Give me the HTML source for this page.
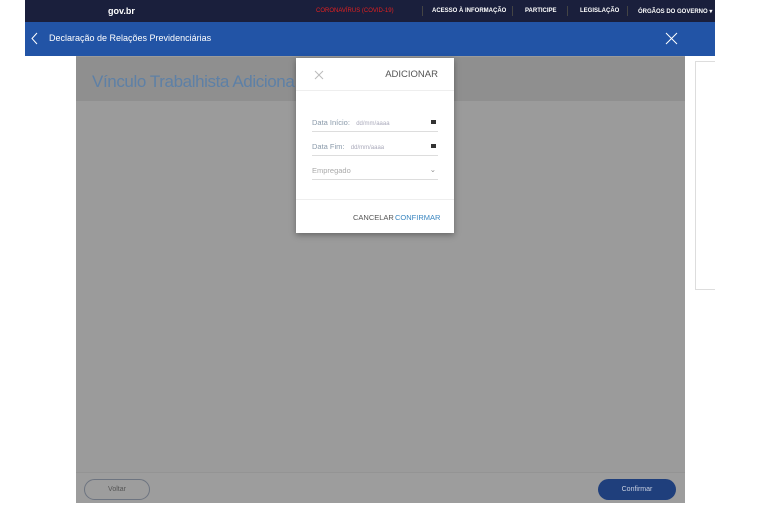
<!DOCTYPE html>
<html><head><meta charset="utf-8"><style>
*{margin:0;padding:0;box-sizing:border-box}
body{width:768px;height:512px;background:#fff;position:relative;overflow:hidden;font-family:"Liberation Sans",sans-serif}
.abs{position:absolute}
#top{left:25px;top:0;width:690px;height:22px;background:#1a1f3c;color:#fff;font-size:6px;font-weight:bold}
#top span{position:absolute;top:8px}
#blue{left:25px;top:22px;width:690px;height:34px;background:#2254a6;color:#fff;font-size:9px}
#panel{left:76px;top:56px;width:609px;height:447px;background:#9b9b9b}
#hdr{left:76px;top:57px;width:609px;height:44px;background:#8f8f8f}
#ftr{left:76px;top:472px;width:609px;height:31px;background:#9d9d9d;border-top:1px solid #949494}
#card{left:695px;top:61px;width:20px;height:229px;background:#fff;border:1px solid #ddd;border-right:none}
#modal{left:296px;top:58px;width:158px;height:175px;background:#fff;box-shadow:0 2px 6px rgba(0,0,0,.35)}
.fld{position:absolute;left:16px;width:126px;border-bottom:1px solid #ddd;font-size:7.5px;color:#8a9aaa;height:14px}
</style></head><body>
<div class="abs" id="top">
<span style="left:83px;top:6px;font-size:9px">gov.br</span>
<span style="left:291px;color:#e02020;font-weight:normal">CORONAVÍRUS (COVID-19)</span>
<span style="left:407px">ACESSO À INFORMAÇÃO</span>
<span style="left:500px">PARTICIPE</span>
<span style="left:555px">LEGISLAÇÃO</span>
<span style="left:613px">ÓRGÃOS DO GOVERNO ▾</span>
<div class="abs" style="left:397px;top:6px;width:1px;height:10px;background:#444"></div>
<div class="abs" style="left:487px;top:6px;width:1px;height:10px;background:#444"></div>
<div class="abs" style="left:542px;top:6px;width:1px;height:10px;background:#444"></div>
<div class="abs" style="left:602px;top:6px;width:1px;height:10px;background:#444"></div>
</div>
<div class="abs" id="blue">
<svg class="abs" style="left:6px;top:10px" width="8" height="13"><path d="M6 1L1 6.5L6 12" stroke="#fff" fill="none" stroke-width="1"/></svg>
<span class="abs" style="left:24px;top:11px">Declaração de Relações Previdenciárias</span>
<svg class="abs" style="left:640px;top:10px" width="13" height="13"><path d="M1 1L12 12M12 1L1 12" stroke="#fff" stroke-width="1"/></svg>
</div>
<div class="abs" id="panel"></div>
<div class="abs" id="hdr"><span class="abs" style="left:16px;top:15px;font-size:17px;letter-spacing:-0.4px;color:#5e80a6;white-space:nowrap">Vínculo Trabalhista Adiciona</span></div>
<div class="abs" id="ftr">
<div class="abs" style="left:8px;top:6px;width:66px;height:21px;border:1px solid #6d7480;border-radius:11px;font-size:7px;color:#555;text-align:center;line-height:19px">Voltar</div>
<div class="abs" style="left:522px;top:6px;width:78px;height:21px;background:#1f3f7c;border-radius:11px;font-size:7px;color:#c8d0e0;text-align:center;line-height:21px">Confirmar</div>
</div>
<div class="abs" id="card"></div>
<div class="abs" id="modal">
<svg class="abs" style="left:18px;top:12px" width="10" height="10"><path d="M1 1L9 9M9 1L1 9" stroke="#bbb" stroke-width="1"/></svg>
<span class="abs" style="right:16px;top:11px;font-size:9.5px;color:#555">ADICIONAR</span>
<div class="abs" style="left:0;top:32px;width:158px;height:1px;background:#eee"></div>
<div class="fld" style="top:60px">Data Início:&nbsp;&nbsp;&nbsp;<span style="font-size:6px;color:#aab">dd/mm/aaaa</span><span style="position:absolute;right:2px;top:2px;width:5px;height:4px;background:#333"></span></div>
<div class="fld" style="top:84px">Data Fim:&nbsp;&nbsp;&nbsp;<span style="font-size:6px;color:#aab">dd/mm/aaaa</span><span style="position:absolute;right:2px;top:2px;width:5px;height:4px;background:#333"></span></div>
<div class="fld" style="top:108px;color:#aaa">Empregado<span style="position:absolute;right:2px;top:-1px;color:#888">⌄</span></div>
<div class="abs" style="left:0;top:141px;width:158px;height:1px;background:#eee"></div>
<span class="abs" style="left:57px;top:155px;font-size:7.5px;color:#555">CANCELAR</span>
<span class="abs" style="left:99px;top:155px;font-size:7.5px;color:#3a86c0">CONFIRMAR</span>
</div>
</body></html>
